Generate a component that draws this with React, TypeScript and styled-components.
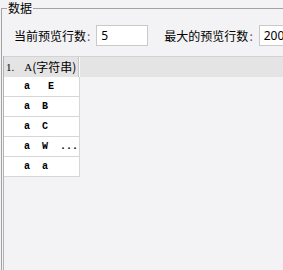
import React from "react";
import styled, { createGlobalStyle } from "styled-components";

const GlobalStyle = createGlobalStyle`
  html, body {
    margin: 0;
    padding: 0;
    background: #f3f3f5;
    overflow: hidden;
  }
  body {
    font-family: "Noto Sans CJK SC", "Noto Sans", sans-serif;
    font-size: 12px;
    color: #000;
  }
`;

const Page = styled.div`
  width: 283px;
  height: 270px;
  overflow: hidden;
  padding: 0 0 0 1px;
  box-sizing: border-box;
`;

const Group = styled.fieldset`
  margin: 0;
  padding: 0;
  border: 1px solid #a3a3a3;
  border-right: none;
  border-bottom: none;
  width: 320px;
  height: 300px;
  box-sizing: border-box;
  min-inline-size: 0;
`;

const Legend = styled.legend`
  margin-left: 5px;
  padding: 0 1px;
  font-size: 12px;
  line-height: 16px;
  height: 16px;
  color: #000;
`;

const OptionsRow = styled.div`
  display: flex;
  align-items: center;
  padding: 9px 0 0 12px;
  height: 21px;
`;

const Label = styled.span`
  font-size: 12px;
  line-height: 21px;
  white-space: nowrap;
  margin-right: 6px;
`;

const Colon = styled.span`
  color: #6b4d7c;
  margin-left: 1px;
`;

const NumberInput = styled.div<{ $w: number; $gap?: number }>`
  width: ${(p) => p.$w}px;
  height: 21px;
  box-sizing: border-box;
  border: 1px solid #c9c9c9;
  background: #fff;
  font-family: "Noto Sans", sans-serif;
  font-size: 12px;
  line-height: 19px;
  padding-left: 4px;
  margin-right: ${(p) => p.$gap ?? 0}px;
  flex-shrink: 0;
`;

const Grid = styled.div`
  margin: 10px 0 0 1px;
  border-left: 1px solid #b4b4b4;
  height: 240px;
`;

const HeaderBand = styled.div`
  display: flex;
  height: 21px;
  background: #e4e4e4;
  border-top: 1px solid #d3d3d3;
  box-sizing: border-box;
`;

const HeaderCell = styled.div`
  width: 75px;
  box-sizing: border-box;
  display: flex;
  align-items: center;
  padding-left: 2px;
  border-right: 1px solid #c4c4c4;
  box-shadow: 1px 0 0 #fafafa;
  white-space: pre;
`;

const Serif = styled.span<{ $gap?: number }>`
  font-family: "Liberation Serif", serif;
  font-size: 11px;
  margin-left: ${(p) => p.$gap ?? 0}px;
`;

const HeaderText = styled.span`
  font-size: 12px;
  line-height: 20px;
`;

const Cell = styled.div`
  width: 76px;
  height: 20px;
  box-sizing: border-box;
  background: #fff;
  border-right: 1px solid #d6d6d6;
  border-bottom: 1px solid #d6d6d6;
  font-family: "Liberation Mono", monospace;
  font-size: 10px;
  line-height: 19px;
  padding-left: 20px;
  white-space: pre;
  font-weight: bold;
`;

const rows = ["a   E", "a  B", "a  C", "a  W  ...", "a  a"];

export default function App() {
  return (
    <Page>
      <GlobalStyle />
      <Group>
        <Legend>数据</Legend>
        <OptionsRow>
          <Label>
            当前预览行数<Colon>:</Colon>
          </Label>
          <NumberInput $w={52} $gap={16}>5</NumberInput>
          <Label>
            最大的预览行数<Colon>:</Colon>
          </Label>
          <NumberInput $w={60}>200</NumberInput>
        </OptionsRow>
        <Grid>
          <HeaderBand>
            <HeaderCell>
              <Serif>1.</Serif>
              <Serif $gap={10}>A</Serif>
              <HeaderText>(字符串)</HeaderText>
            </HeaderCell>
          </HeaderBand>
          {rows.map((r, i) => (
            <Cell key={i}>{r}</Cell>
          ))}
        </Grid>
      </Group>
    </Page>
  );
}
